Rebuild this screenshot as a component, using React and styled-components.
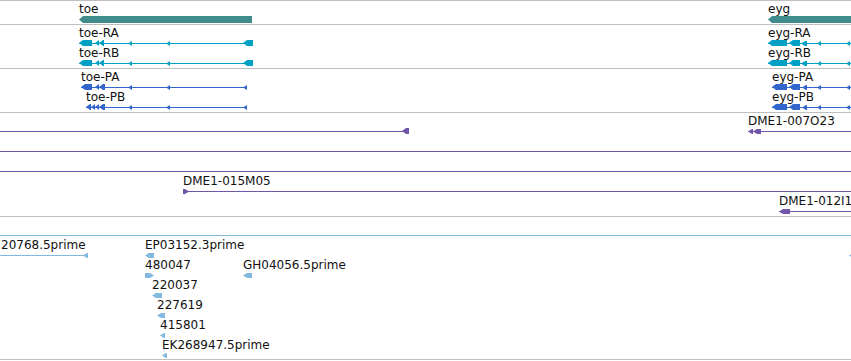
import React from "react";
import styled, { createGlobalStyle } from "styled-components";

const GlobalStyle = createGlobalStyle`
  html, body { margin: 0; padding: 0; background: #fff; }
  body { font-family: "DejaVu Sans", Verdana, sans-serif; }
`;

const Panel = styled.div`
  width: 851px;
  height: 361px;
  overflow: hidden;
  background: #fff;
`;

const Track = styled.div`
  position: relative;
  height: ${(p) => p.$h}px;
  border-top: 1px solid #bfbfbf;
  border-bottom: ${(p) => (p.$last ? "1px solid #bfbfbf" : "0")};
  overflow: hidden;
`;

const Item = styled.div`
  position: absolute;
  left: ${(p) => p.$x}px;
  top: ${(p) => p.$y}px;
  display: flex;
  flex-direction: column;
  align-items: flex-start;
`;

const Label = styled.span`
  display: block;
  height: 12px;
  line-height: 12px;
  font-size: 12px;
  color: #111;
  white-space: nowrap;
  padding-left: ${(p) => p.$dx || 0}px;
`;

const Glyph = styled.svg`
  display: block;
  overflow: visible;
  fill: ${(p) => p.$color};
`;

const GENE = "#408c8c";
const MRNA = "#00a0c4";
const PROT = "#3366cc";
const BAC = "#7056a8";
const EST = "#82b9de";

// a block with an arrow tip on the left ('l'), right ('r') or none
function shape(a, b, dir, n, from) {
  const top = Math.round(4.5 - n / 2 - 0.01);
  const bot = top + n;
  const mid = (top + bot) / 2;
  const x1 = a - from;
  const x2 = b - from;
  const tip = Math.min(4, x2 - x1);
  if (dir === "l")
    return `${x1},${mid} ${x1 + tip},${top} ${x2},${top} ${x2},${bot} ${x1 + tip},${bot}`;
  if (dir === "r")
    return `${x1},${top} ${x2 - tip},${top} ${x2},${mid} ${x2 - tip},${bot} ${x1},${bot}`;
  return `${x1},${top} ${x2},${top} ${x2},${bot} ${x1},${bot}`;
}

const mark = (x) => [x, x + 4, "l", 5];

const toeRna = [[79, 92, "l", 6], [95, 99, "l", 6], [99, 104, "l", 6], mark(128), mark(166), [243, 253, "l", 6]];
const eygRna = [[768, 787, "l", 6], [789, 800, "l", 6], [801, 807, "l", 5], mark(817), mark(846)];

const tracks = [
  {
    h: 23,
    features: [
      { label: "toe", from: 79, to: 252, c: 19, color: GENE, parts: [[79, 252, "l", 7]] },
      { label: "eyg", from: 768, to: 860, c: 19, color: GENE, parts: [[768, 860, "l", 7]] },
    ],
  },
  {
    h: 43,
    features: [
      { label: "toe-RA", from: 79, to: 253, c: 43, color: MRNA, line: true, parts: toeRna },
      { label: "toe-RB", from: 79, to: 253, c: 63, color: MRNA, line: true, parts: toeRna },
      { label: "eyg-RA", from: 768, to: 860, c: 43, color: MRNA, line: true, parts: eygRna },
      { label: "eyg-RB", from: 768, to: 860, c: 63, color: MRNA, line: true, parts: eygRna },
    ],
  },
  {
    h: 43,
    features: [
      {
        label: "toe-PA", from: 81, to: 247, c: 87, color: PROT, line: true,
        parts: [[81, 92, "l", 6], [95, 99, "l", 6], [99, 105, "l", 6], mark(128), mark(166), mark(243)],
      },
      {
        label: "toe-PB", from: 86, to: 247, c: 107, color: PROT, line: true,
        parts: [[86, 91, "l", 6], [91, 95, "l", 6], [95, 99, "l", 6], [99, 105, "l", 6], mark(128), mark(166), mark(243)],
      },
      {
        label: "eyg-PA", from: 772, to: 860, c: 87, color: PROT, line: true,
        parts: [[772, 787, "l", 6], [789, 800, "l", 6], [802, 807, "l", 5], mark(817), mark(846)],
      },
      {
        label: "eyg-PB", from: 772, to: 860, c: 107, color: PROT, line: true,
        parts: [[772, 787, "l", 6], [789, 800, "l", 6], [802, 807, "l", 5], mark(817), mark(846)],
      },
    ],
  },
  {
    h: 103,
    features: [
      { label: "", from: 0, to: 409, c: 131, color: BAC, line: true, parts: [[402, 409, "l", 6]] },
      {
        label: "DME1-007O23", from: 748, to: 860, c: 131, color: BAC, line: true,
        parts: [[748, 753, "l", 5], [753, 761, "l", 5]],
      },
      { label: "", from: 0, to: 851, c: 151, color: BAC, line: true },
      { label: "", from: 0, to: 851, c: 171, color: BAC, line: true },
      { label: "DME1-015M05", from: 183, to: 860, c: 191, color: BAC, line: true, parts: [[183, 189, "r", 5]] },
      { label: "DME1-012I13", from: 779, to: 860, c: 211, color: BAC, line: true, parts: [[779, 790, "l", 5]] },
    ],
  },
  {
    h: 142,
    last: true,
    features: [
      { label: "", from: 0, to: 851, c: 235, color: EST, line: true },
      { label: "20768.5prime", dx: 1, from: 0, to: 88, c: 255, color: EST, line: true, parts: [[83, 88, "l", 5]] },
      { label: "EP03152.3prime", from: 145, to: 154, c: 255, color: EST, parts: [[145, 154, "l", 5]] },
      { label: "", from: 849, to: 858, c: 255, color: EST, parts: [[849, 858, "l", 5]] },
      { label: "480047", from: 145, to: 154, c: 275, color: EST, parts: [[145, 154, "r", 5]] },
      { label: "GH04056.5prime", from: 243, to: 252, c: 275, color: EST, parts: [[243, 252, "l", 5]] },
      { label: "220037", from: 152, to: 162, c: 295, color: EST, parts: [[152, 162, "l", 5]] },
      { label: "227619", from: 157, to: 165, c: 315, color: EST, parts: [[157, 165, "l", 5]] },
      { label: "415801", from: 160, to: 165, c: 335, color: EST, parts: [[160, 165, "l", 5]] },
      { label: "EK268947.5prime", from: 162, to: 167, c: 355, color: EST, parts: [[162, 167, "l", 5]] },
    ],
  },
];

function Feature({ f, origin }) {
  const w = f.to - f.from;
  return (
    <Item $x={f.from} $y={f.c - 16 - origin}>
      <Label $dx={f.dx}>{f.label}</Label>
      <Glyph width={w} height={9} viewBox={`0 0 ${w} 9`} $color={f.color}>
        {f.line && <rect x={0} y={4} width={w} height={1} />}
        {(f.parts || []).map(([a, b, dir, n], i) => (
          <polygon key={i} points={shape(a, b, dir, n, f.from)} />
        ))}
      </Glyph>
    </Item>
  );
}

export default function App() {
  let y = 0;
  return (
    <Panel>
      <GlobalStyle />
      {tracks.map((t, i) => {
        const origin = y + 1;
        y += t.h + 1;
        return (
          <Track key={i} $h={t.h} $last={t.last}>
            {t.features.map((f, j) => (
              <Feature key={j} f={f} origin={origin} />
            ))}
          </Track>
        );
      })}
    </Panel>
  );
}
